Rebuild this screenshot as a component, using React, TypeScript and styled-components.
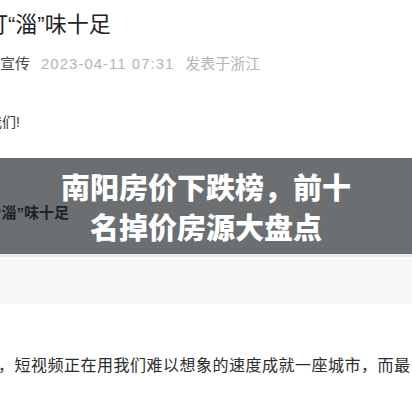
import React from 'react';
import styled, { createGlobalStyle } from 'styled-components';

const GlobalStyle = createGlobalStyle`
    html, body {
        margin: 0;
        padding: 0;
        background: #ffffff;
    }
    body {
        font-family: "Liberation Sans", "Noto Sans CJK SC", sans-serif;
    }
`;

const Page = styled.div`
    width: 412px;
    height: 412px;
    overflow: hidden;
    background: #ffffff;
    display: flex;
    flex-direction: column;
`;

const Headline = styled.div`
    margin: 10px 0 0 -14px;
    font-size: 22px;
    line-height: 30px;
    color: #222222;
    white-space: nowrap;
`;

const Meta = styled.div`
    margin-top: 12px;
    display: flex;
    align-items: center;
    gap: 11px;
    font-size: 15px;
    line-height: 24px;
    white-space: nowrap;
`;

const MetaItem = styled.span<{ $muted?: boolean; $spaced?: boolean }>`
    color: ${p => (p.$muted ? '#b4b4b4' : '#4a4a4a')};
    letter-spacing: ${p => (p.$spaced ? '1px' : '0')};
`;

const Greeting = styled.div`
    margin: 35px 0 0 -12px;
    font-size: 14px;
    line-height: 22px;
    color: #333333;
`;

const Banner = styled.div`
    margin-top: 25px;
    height: 96px;
    box-sizing: border-box;
    padding: 8px 0;
    background: #6b6f72;
    display: grid;
    grid-template-columns: minmax(0, 1fr) auto minmax(0, 1fr);
`;

const BannerAside = styled.div`
    align-self: center;
    margin: 14px 0 0 -6px;
    font-size: 15px;
    line-height: 20px;
    font-weight: 700;
    color: #202325;
    white-space: nowrap;
`;

const BannerTitle = styled.div`
    font-family: "Noto Sans CJK SC", sans-serif;
    font-size: 29px;
    line-height: 40px;
    font-weight: 900;
    color: #ffffff;
    text-align: center;
`;

const Rule = styled.div`
    height: 3px;
    background: #e6eaed;
    border-bottom: 3px solid #fbfbfb;
`;

const Shade = styled.div`
    height: 44px;
    background: #f7f7f7;
`;

const Paragraph = styled.div`
    margin: 49px 0 0 -2px;
    font-size: 16px;
    line-height: 26px;
    letter-spacing: 0.5px;
    color: #2b2b2b;
    white-space: nowrap;
`;

const App: React.FC = () => {
    return (
        <Page>
            <GlobalStyle />
            <Headline>打“淄”味十足</Headline>
            <Meta>
                <MetaItem>宣传</MetaItem>
                <MetaItem $muted $spaced>2023-04-11 07:31</MetaItem>
                <MetaItem $muted>发表于浙江</MetaItem>
            </Meta>
            <Greeting>我们!</Greeting>
            <Banner>
                <BannerAside>“淄”味十足</BannerAside>
                <BannerTitle>
                    南阳房价下跌榜，前十
                    <br />
                    名掉价房源大盘点
                </BannerTitle>
                <div />
            </Banner>
            <Rule />
            <Shade />
            <Paragraph>，短视频正在用我们难以想象的速度成就一座城市，而最</Paragraph>
        </Page>
    );
};

export default App;
